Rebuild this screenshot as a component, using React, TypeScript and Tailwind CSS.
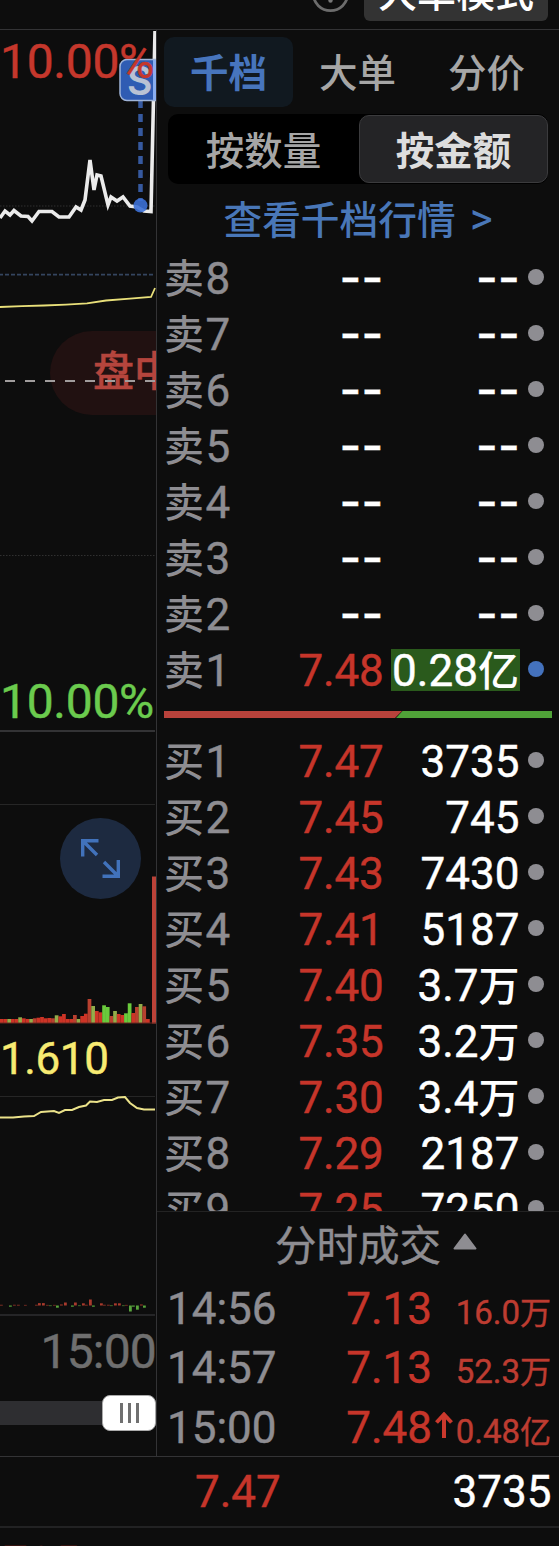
import React from "react";

type Level = { side: string; level: string; price: string; amount: string; unit?: string; highlight?: boolean };

const sells: Level[] = [
  ...["8", "7", "6", "5", "4", "3", "2"].map((level) => ({ side: "卖", level, price: "--", amount: "--" })),
  { side: "卖", level: "1", price: "7.48", amount: "0.28", unit: "亿", highlight: true },
];

const buys: Level[] = [
  { side: "买", level: "1", price: "7.47", amount: "3735" },
  { side: "买", level: "2", price: "7.45", amount: "745" },
  { side: "买", level: "3", price: "7.43", amount: "7430" },
  { side: "买", level: "4", price: "7.41", amount: "5187" },
  { side: "买", level: "5", price: "7.40", amount: "3.7", unit: "万" },
  { side: "买", level: "6", price: "7.35", amount: "3.2", unit: "万" },
  { side: "买", level: "7", price: "7.30", amount: "3.4", unit: "万" },
  { side: "买", level: "8", price: "7.29", amount: "2187" },
  { side: "买", level: "9", price: "7.25", amount: "7250" },
];

const trades = [
  { time: "14:56", price: "7.13", amount: "16.0", unit: "万", up: false },
  { time: "14:57", price: "7.13", amount: "52.3", unit: "万", up: false },
  { time: "15:00", price: "7.48", amount: "0.48", unit: "亿", up: true },
];

const RED = "#cd3426";
const DARK_RED = "#b8402f";
const OLIVE = "#93ad4a";
const GREEN = "#6acb3c";

// [height, colour] of each minute's volume
const volumes: [number, string][] = [
  [4, RED], [4, RED], [4, OLIVE], [4, RED], [4, RED], [5.7, OLIVE], [4.7, RED], [4, RED], [4, OLIVE],
  [4.7, DARK_RED], [5.3, RED], [6, RED], [4.7, RED], [5, RED], [4.7, DARK_RED], [7.7, OLIVE], [6.7, RED],
  [9, RED], [4, RED], [4, RED], [8, DARK_RED], [4, OLIVE], [7, RED], [9.3, RED], [24, DARK_RED], [17, OLIVE],
  [12, RED], [10.7, RED], [17.7, GREEN], [16, GREEN], [7, DARK_RED], [12, OLIVE], [9, RED], [8, RED],
  [9.7, GREEN], [19.7, GREEN], [10, RED], [16, DARK_RED], [19, OLIVE], [16.7, DARK_RED], [4, RED],
];

// [x, signed height] around the zero line
const flows: [number, number][] = [
  [0, 0.7], [9, -1.2], [13, 0.7], [17, 0.7], [24, 0.6], [35, 0.7], [38, 2.4], [42, 2.4], [46, 0.6], [49, -0.6],
  [53, 0.6], [56, -2.2], [60, 1], [64, 3], [71, -1.2], [74, 3], [78, -0.6], [82, 2.2], [85, 0.7], [89, 6],
  [92, -1.2], [100, 2.2], [103, 0.7], [107, 0.7], [110, -0.6], [114, 2.2], [118, 2.2], [122, -0.6], [125, 0.6],
  [129, -6], [132, -1.2], [136, -4.2], [140, 1], [143, -2.2],
];

function PriceCell({ value }: { value: string }) {
  return value === "--" ? (
    <span className="-mt-[5px] font-['Inter'] text-[47px] font-medium leading-[56px] tracking-[0.3px] text-white">--</span>
  ) : (
    <span className="tracking-[-0.2px] text-[#c6352a]">{value}</span>
  );
}

function LevelRow({ row }: { row: Level }) {
  return (
    <div className="flex h-14 shrink-0 items-center text-[44px] leading-[56px]">
      <div className="flex w-[100px] gap-[1.5px] pl-[7px] pt-[2px] text-[#8e8d92]">
        <span className="mt-[1px] text-[40px] font-medium [-webkit-text-stroke:0]">{row.side}</span>
        <span>{row.level}</span>
      </div>
      <div className="flex w-[126.5px] justify-end pt-[2px]">
        <PriceCell value={row.price} />
      </div>
      <div className="flex w-[136.5px] justify-end">
        {row.amount === "--" ? (
          <span className="flex pt-[2px]">
            <PriceCell value="--" />
          </span>
        ) : row.highlight ? (
          <span className="flex h-[42px] w-[129px] items-center justify-center bg-[#2a5a1c] pt-[2px] text-white">
            <span className="whitespace-nowrap">
              {row.amount}
              <span className="text-[41px] font-medium [-webkit-text-stroke:0]">{row.unit}</span>
            </span>
          </span>
        ) : (
          <span className="pr-[0.5px] pt-[2px] text-white">
            {row.amount}
            {row.unit && <span className="text-[41px] font-medium [-webkit-text-stroke:0]">{row.unit}</span>}
          </span>
        )}
      </div>
      <div className={`mb-[2px] ml-2 size-4 rounded-full ${row.highlight ? "bg-[#4472bd]" : "bg-[#8e8d92]"}`} />
    </div>
  );
}

function ChartColumn() {
  return (
    <div className="flex w-[156px] shrink-0 flex-col overflow-hidden">
      <div className="relative h-[702px] shrink-0">
        <svg className="block" width="156" height="702" viewBox="0 30 156 702">
          <path d="M0 206H156M0 555.5H156" stroke="#303030" strokeWidth="1" strokeDasharray="1.5 1.5" />
          <path d="M0 274.7H153" stroke="#34455f" strokeWidth="1.8" strokeDasharray="4 2" strokeDashoffset="1" />
          <path d="M156 331H92a42 42 0 0 0 0 84h64z" fill="#211111" />
          <path
            d="M0 307L22 306.2L44 305.5L66 304.6L87 303.3L106 300.5L130 298.6L151 297L155 288"
            fill="none"
            stroke="#e9e07a"
            strokeWidth="1.8"
          />
          <path
            d="M0 218L5 211L10 215L14 210.500L21 216L28 216.500L32 221L39 211.500H52L59 217H69L76 207L81 210L85 200L90 160L94 190L97 175L101 176L108 205L111 197L117 201L123 197L130 206L137 207L144 211L151 211.500L155 31"
            fill="none"
            stroke="#ebebeb"
            strokeWidth="3.6"
          />
          <path d="M140.500 101V201" stroke="#36599f" strokeWidth="4.500" strokeDasharray="8 6" strokeDashoffset="1" />
          <circle cx="140.500" cy="205.500" r="7" fill="#3c70d6" fillOpacity=".9" />
          <rect x="120" y="59.500" width="44" height="41" rx="7" fill="#2f5cb3" stroke="#9fb4d8" strokeWidth="1.500" />
          <path d="M154.500 60V100" stroke="#8aaef0" strokeWidth="3" />
          <text x="127" y="95" fill="#b9c2d4" fontSize="39" fontWeight="600" fontFamily="Inter">S</text>
          <path d="M0 731H155" stroke="#333335" strokeWidth="2" />
        </svg>
        <div className="absolute left-0 top-[8px] text-[48px] leading-[48px] tracking-[-0.3px] text-[#c5372c]">10.00%</div>
        <div className="absolute left-[93px] top-[316px] whitespace-nowrap text-[41px] font-medium leading-[52px] text-[#b5453d]">
          盘中
        </div>
        <svg className="absolute left-0 top-[349px]" width="156" height="4">
          <path d="M5 2H156" stroke="#a19d9d" strokeWidth="1.8" strokeDasharray="10 10" />
        </svg>
        <div className="absolute left-0 top-[648px] text-[48px] leading-[48px] tracking-[-0.3px] text-[#6bcb4e]">10.00%</div>
      </div>

      <svg className="block shrink-0" width="156" height="292" viewBox="0 732 156 292">
        <path d="M0 804.500H155" stroke="#262626" strokeWidth="1" />
        <circle cx="100.500" cy="858.500" r="40.500" fill="#1d2a40" />
        <path
          d="M82.700 856.500V840.700H98.500M83 841L97 855M118.300 860V876.200H102.500M118 876L104 862"
          fill="none"
          stroke="#4172bb"
          strokeWidth="3.4"
        />
        {volumes.map(([h, color], i) => (
          <rect key={i} x={i * 3.65} y={1023 - h} width="3.75" height={h} fill={color} />
        ))}
        <rect x="152" y="876.500" width="4" height="147" fill="#bb4238" />
        <path d="M0 1023H156" stroke="#6d2b22" strokeWidth="1" />
      </svg>

      <div className="h-[72px] shrink-0 pt-[10px] text-[44px] leading-[50px] tracking-[-0.4px] text-[#f8eb72]">1.610</div>

      <svg className="block shrink-0" width="156" height="220" viewBox="0 1096 156 220">
        <path d="M0 1096.500H155" stroke="#262626" strokeWidth="1" />
        <path
          d="M0 1117.500H13L24 1116.500L34 1116L41 1112L54 1111L59 1113L65 1110L72 1110L79 1107L86 1105.500L90 1101.500L97 1102L104 1100L112 1100L118 1097.500L125 1097L130 1103L137 1108L144 1109.500H155"
          fill="none"
          stroke="#ebe28a"
          strokeWidth="2"
        />
        {flows.map(([x, h], i) => (
          <rect
            key={i}
            x={x}
            y={h > 0 ? 1305.5 - h : 1305.5}
            width="2.8"
            height={Math.abs(h)}
            fill={h > 0 ? "#a83a2c" : "#58a33c"}
          />
        ))}
        <path d="M0 1315H155" stroke="#252527" strokeWidth="2" />
      </svg>

      <div className="flex h-[79px] shrink-0 justify-end pt-[8px] text-[48px] leading-[56px] tracking-[-0.8px] text-[#6f6f6f]">
        15:00
      </div>

      <div className="flex h-9 shrink-0 items-center">
        <div className="h-6 flex-1 bg-[#2e2e31]" />
        <div className="flex h-9 w-[54px] items-center justify-center gap-[5px] rounded-lg border border-[#aaa] bg-white">
          {[0, 1, 2].map((i) => (
            <div key={i} className="h-5 w-[3px] bg-[#707070]" />
          ))}
        </div>
      </div>
    </div>
  );
}

export default function App() {
  return (
    <div className="flex h-[1546px] w-[559px] flex-col overflow-hidden bg-[#0d0d0d] font-['Roboto','Noto_Sans_CJK_SC',sans-serif] [-webkit-text-stroke:0.45px]">
      <header className="flex h-[30px] shrink-0 items-start justify-end gap-[14px] overflow-hidden border-b border-[#333335] pr-[11px] [-webkit-text-stroke:0]">
        <svg width="40" height="14" viewBox="310 0 40 14">
          <circle cx="330.500" cy="-6.500" r="17.200" fill="none" stroke="#6c6c6c" strokeWidth="2.800" />
          <circle cx="330.500" cy="0.500" r="2.200" fill="#777" />
        </svg>
        <div className="flex h-[21px] w-[184px] items-end justify-center rounded-b-md bg-[#333333] pb-[1px]">
          <span className="whitespace-nowrap text-[39px] font-medium leading-[52px] text-white">大单模式</span>
        </div>
      </header>

      <div className="flex h-[1426px] shrink-0">
        <ChartColumn />
        <div className="flex w-[403px] shrink-0 flex-col border-l border-[#333335]">
          <div className="flex h-[1181px] shrink-0 flex-col overflow-hidden">
            <div className="ml-[7px] mt-[7px] flex h-[70px] shrink-0 text-[38.5px] leading-[74px] text-[#a6a6a6] [-webkit-text-stroke:0]">
              <div className="w-[129px] rounded-[10px] bg-[#111920] text-center font-bold text-[#4775bd]">千档</div>
              <div className="w-[129px] text-center font-medium">大单</div>
              <div className="w-[129px] text-center font-medium">分价</div>
            </div>
            <div className="ml-[11px] mt-[7px] flex h-[70px] w-[380px] shrink-0 rounded-[10px] bg-black text-[38.5px] leading-[75px] [-webkit-text-stroke:0]">
              <div className="w-[191px] text-center font-medium text-[#a6a6a6]">按数量</div>
              <div className="my-px flex-1 rounded-[10px] border border-[#3b3b3d] bg-[#242426] text-center font-bold leading-[71px] text-[#dddddd]">
                按金额
              </div>
            </div>
            <div className="flex h-[66px] shrink-0 items-baseline pl-[66.5px] text-[38.7px] font-medium leading-[71px] text-[#4977b8] [-webkit-text-stroke:0]">
              <span>查看千档行情</span>
              <span className="ml-[14px] text-[44px] font-normal">&gt;</span>
            </div>

            {sells.map((row) => (
              <LevelRow key={row.level} row={row} />
            ))}
            <svg className="mb-[15px] ml-[7px] mt-[13px] block shrink-0" width="388" height="7">
              <path d="M0 0H238L231 7H0z" fill="#b8423b" />
              <path d="M238.500 0H388V7H232z" fill="#50a238" />
            </svg>
            {buys.map((row) => (
              <LevelRow key={row.level} row={row} />
            ))}
          </div>

          <div className="flex h-[69px] shrink-0 items-center border-t border-[#232323] pl-[118px] text-[41.5px] text-[#8e8d92]">
            <span className="pt-[2px] leading-[66px]">分时成交</span>
            <svg className="mb-[9px] ml-[12px]" width="24" height="17" viewBox="0 0 24 17">
              <path d="M12 1.500L22.500 15.500H1.500z" fill="#8e8d92" stroke="#8e8d92" strokeWidth="2" strokeLinejoin="round" />
            </svg>
          </div>

          {trades.map((t) => (
            <div key={t.time} className="flex h-[59.3px] shrink-0 items-baseline text-[44px] leading-[59px] text-[#c6352a]">
              <span className="w-[130px] pl-[10px] text-[#8e8d92]">{t.time}</span>
              <span className="w-[145px] text-right">{t.price}</span>
              <span className="flex w-[21px] pl-[3px]">
                {t.up && (
                  <svg className="relative -top-[5px]" width="18" height="26" viewBox="0 0 18 26">
                    <path d="M9 26V3M1.500 10.500L9 2.500L16.500 10.500" fill="none" stroke="#cb392d" strokeWidth="4" />
                  </svg>
                )}
              </span>
              <span className="w-[98px] whitespace-nowrap text-right text-[33px] text-[#bd3c31]">
                {t.amount}
                <span className="text-[31px]">{t.unit}</span>
              </span>
            </div>
          ))}
        </div>
      </div>

      <div className="flex h-[72px] shrink-0 justify-between border-b-2 border-t border-b-[#222223] border-t-[#333335] pl-[195px] pr-[7.5px] text-[44px] leading-[70px]">
        <span className="text-[#c6352a]">7.47</span>
        <span className="text-white">3735</span>
      </div>
      <div className="h-[18px] shrink-0 overflow-hidden pl-[3px] pt-[10px] text-[44px] leading-[50px] tracking-[1px] text-[#a02a20]">
        705
      </div>
    </div>
  );
}
